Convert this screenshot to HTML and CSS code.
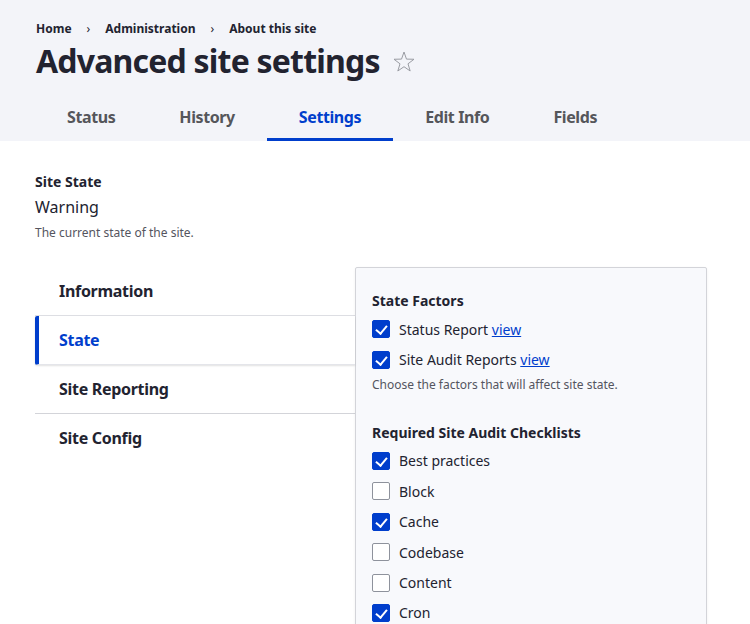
FILE: index.html
```html
<!DOCTYPE html>
<html>
<head>
<meta charset="utf-8">
<link rel="stylesheet" href="styles.css">
</head>
<body>
<header class="page-header">
  <nav class="breadcrumb">
    <a href="#">Home</a><span class="sep">›</span><a href="#">Administration</a><span class="sep">›</span><a href="#">About this site</a>
  </nav>
  <h1 class="title">Advanced site settings<svg class="star" width="22" height="22" viewBox="0 0 22 22"><polygon points="11,1 13.47,8.1 20.99,8.26 15,12.8 17.17,19.99 11,15.7 4.83,19.99 7,12.8 1.01,8.26 8.53,8.1" fill="none" stroke="#9a9ca3" stroke-width="1" stroke-linejoin="miter"/></svg></h1>
  <ul class="tabs">
    <li class="tab">Status</li>
    <li class="tab">History</li>
    <li class="tab active">Settings</li>
    <li class="tab">Edit Info</li>
    <li class="tab">Fields</li>
  </ul>
</header>
<main class="content">
  <div class="field">
    <div class="field-label">Site State</div>
    <div class="field-value">Warning</div>
    <div class="field-desc">The current state of the site.</div>
  </div>
  <div class="vtabs">
    <ul class="vtabs-menu">
      <li class="vtab">Information</li>
      <li class="vtab selected">State</li>
      <li class="vtab">Site Reporting</li>
      <li class="vtab">Site Config</li>
    </ul>
    <section class="pane">
      <div class="group">
        <div class="group-title">State Factors</div>
        <label class="check"><span class="box on"></span>Status Report&nbsp;<a href="#">view</a></label>
        <label class="check"><span class="box on"></span>Site Audit Reports&nbsp;<a href="#">view</a></label>
        <div class="group-desc">Choose the factors that will affect site state.</div>
      </div>
      <div class="group">
        <div class="group-title">Required Site Audit Checklists</div>
        <label class="check"><span class="box on"></span>Best practices</label>
        <label class="check"><span class="box"></span>Block</label>
        <label class="check"><span class="box on"></span>Cache</label>
        <label class="check"><span class="box"></span>Codebase</label>
        <label class="check"><span class="box"></span>Content</label>
        <label class="check"><span class="box on"></span>Cron</label>
      </div>
    </section>
  </div>
</main>
</body>
</html>
```
FILE: styles.css
```css
* { box-sizing: border-box; }
html, body { margin: 0; padding: 0; }
body {
  font-family: "Noto Sans", "Open Sans", sans-serif;
  color: #222330;
  background: #fff;
  width: 750px;
  height: 624px;
  overflow: hidden;
}
.page-header {
  background: #f3f4f9;
  padding: 20px 0 0 36px;
  height: 141px;
}
.breadcrumb {
  font-size: 12px;
  font-weight: 700;
  line-height: 18px;
  display: flex;
}
.breadcrumb a { color: #222330; text-decoration: none; }
.breadcrumb .sep { margin: 0 15px; font-weight: 400; }
.title {
  margin: 3px 0 0 0;
  font-size: 32px;
  line-height: 40px;
  font-weight: 700;
  letter-spacing: -0.8px;
  display: flex;
  align-items: center;
}
.star {
  margin-left: 13px;
  margin-top: 1px;
  flex: none;
}
.tabs {
  list-style: none;
  display: flex;
  margin: 18px 0 0 -1px;
  padding: 0;
}
.tab {
  padding: 0 32px;
  height: 42px;
  line-height: 36px;
  font-size: 16px;
  font-weight: 700;
  letter-spacing: -0.4px;
  color: #55565b;
  border-bottom: 3px solid transparent;
}
.tab.active {
  color: #003ecc;
  border-bottom-color: #003ecc;
}
.content {
  padding: 31px 0 0 35px;
}
.field-label { font-size: 14px; font-weight: 700; line-height: 20px; }
.field-value { font-size: 16px; line-height: 24px; margin-top: 3px; }
.field-desc { font-size: 12px; line-height: 18px; color: #545560; margin-top: 5px; }
.vtabs {
  display: flex;
  margin-top: 25px;
  align-items: flex-start;
}
.vtabs-menu {
  list-style: none;
  margin: 0;
  padding: 0;
  width: 320px;
}
.vtab {
  height: 49px;
  line-height: 48px;
  padding-left: 24px;
  font-size: 16px;
  font-weight: 700;
  letter-spacing: -0.3px;
  border-bottom: 1px solid #d3d4d9;
}
.vtab:first-child { border-bottom-color: #dedfe4; }
.vtab:last-child { border-bottom-color: transparent; }
.vtab.selected {
  background: #fff;
  color: #003ecc;
  border-left: 4px solid #003ecc;
  border-radius: 2px 0 0 2px;
  padding-left: 20px;
  box-shadow: 0 1px 2px rgba(0,0,0,0.12);
  position: relative;
  border-bottom-color: #e4e5ea;
}
.pane {
  width: 352px;
  height: 400px;
  background: #f8f9fc;
  border: 1px solid #d3d4d9;
  border-radius: 2px;
  box-shadow: 0 1px 3px rgba(0,0,0,0.06);
  padding: 24px 16px 0 16px;
}
.group { margin-bottom: 30px; }
.group-title {
  font-size: 14px;
  font-weight: 700;
  line-height: 18px;
  margin-bottom: 4px;
}
.check {
  display: flex;
  align-items: center;
  height: 30.4px;
  font-size: 14px;
  color: #222330;
}
.check a { color: #003ecc; text-decoration: underline; }
.box {
  width: 18px;
  height: 18px;
  border: 1px solid #8e929c;
  border-radius: 2px;
  background: #fff;
  margin-right: 9px;
  position: relative;
  flex: none;
}
.box.on {
  background: #003ecc;
  border-color: #003ecc;
}
.box.on::after {
  content: "";
  position: absolute;
  left: 5px;
  top: 2px;
  width: 5px;
  height: 9px;
  border: solid #fff;
  border-width: 0 2px 2px 0;
  transform: rotate(40deg);
}
.group-desc {
  font-size: 12px;
  line-height: 18px;
  color: #545560;
  margin-top: 1px;
}
```
